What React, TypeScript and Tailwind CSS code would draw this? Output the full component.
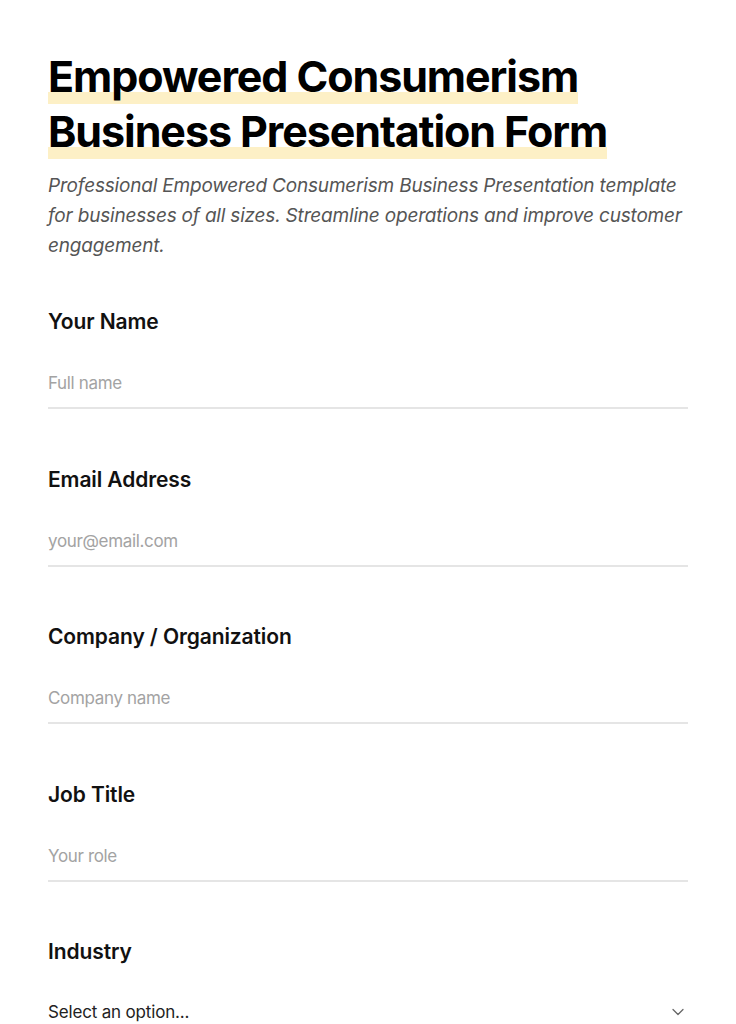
import React from "react";
import { ChevronDown } from "lucide-react";

const fields = [
  { label: "Your Name", placeholder: "Full name" },
  { label: "Email Address", placeholder: "your@email.com" },
  { label: "Company / Organization", placeholder: "Company name" },
  { label: "Job Title", placeholder: "Your role" },
];

export default function App() {
  return (
    <div className="min-h-screen bg-white px-12 pt-[49px] pb-16 font-['Inter',sans-serif] text-black">
      <h1 className="text-[43px] font-bold leading-[55px] tracking-[-0.025em]">
        <span className="bg-[linear-gradient(transparent_77%,#fdf0c6_77%)] pb-[2px] [box-decoration-break:clone] [-webkit-box-decoration-break:clone]">
          Empowered Consumerism Business Presentation Form
        </span>
      </h1>
      <p className="mt-[12px] text-[19px] italic leading-[30px] tracking-[-0.01em] text-[#555555]">
        Professional Empowered Consumerism Business Presentation template for businesses of all sizes. Streamline operations and improve customer engagement.
      </p>
      <div className="mt-[47px] flex flex-col">
        {fields.map((f) => (
          <div key={f.label} className="mb-[56.5px] flex flex-col">
            <label className="text-[21px] font-semibold leading-[28px] tracking-[-0.005em] text-[#111111]">{f.label}</label>
            <div className="mt-[25px] border-b-2 border-[#e5e5e5] pt-[11px] pb-[13px] text-[17px] leading-[22px] tracking-[-0.02em] text-[#a3a3a3]">
              {f.placeholder}
            </div>
          </div>
        ))}
        <div className="flex flex-col">
          <label className="text-[21px] font-semibold leading-[28px] tracking-[-0.005em] text-[#111111]">Industry</label>
          <div className="mt-[23px] flex items-center justify-between border-b-2 border-[#e5e5e5] py-[12px] text-[17px] leading-[22px] tracking-[-0.01em] text-[#222222]">
            <span>Select an option...</span>
            <ChevronDown className="h-[20px] w-[20px] text-[#666666]" strokeWidth={1.5} />
          </div>
        </div>
      </div>
    </div>
  );
}
